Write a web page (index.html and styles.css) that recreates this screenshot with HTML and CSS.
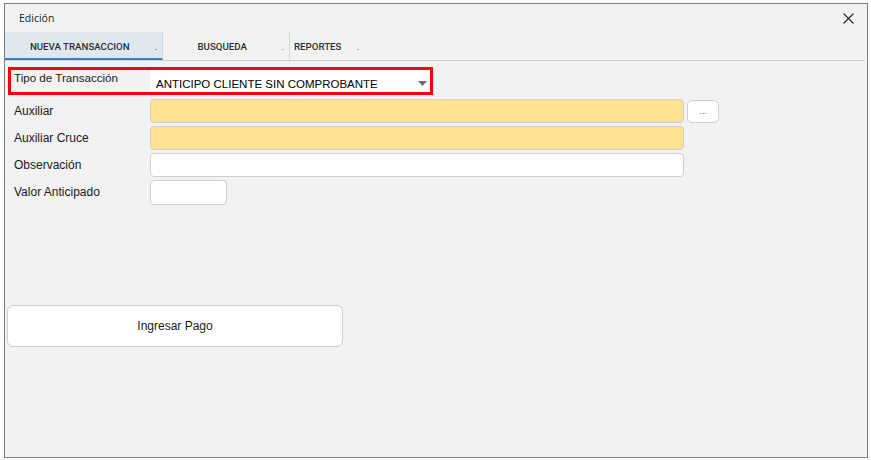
FILE: index.html
```html
<!DOCTYPE html>
<html lang="es">
<head>
    <meta charset="UTF-8">
    <title>Edición</title>
    <link rel="stylesheet" href="styles.css">
</head>
<body>
    <div class="window">
        <div class="titlebar">
            <span class="title">Edición</span>
            <svg class="close" width="11" height="11" viewBox="0 0 11 11">
                <path d="M0.5 0.5 L10.5 10.5 M10.5 0.5 L0.5 10.5" stroke="#2b2b2b" stroke-width="1.2" fill="none"/>
            </svg>
        </div>
        <ul class="tabs">
            <li class="tab active"><span class="tab-label">NUEVA TRANSACCION</span><span class="dot">.</span></li>
            <li class="tab"><span class="tab-label">BUSQUEDA</span><span class="dot">.</span></li>
            <li class="tab last"><span class="tab-label">REPORTES</span><span class="dot">.</span></li>
        </ul>
        <div class="form">
            <div class="row highlight">
                <label class="label">Tipo de Transacción</label>
                <div class="combo">
                    <span>ANTICIPO CLIENTE SIN COMPROBANTE</span>
                    <svg width="9" height="5" viewBox="0 0 9 5"><path d="M0 0 L9 0 L4.5 5 Z" fill="#6b6b6b"/></svg>
                </div>
            </div>
            <div class="row">
                <label class="label">Auxiliar</label>
                <div class="field wide yellow"></div>
                <button class="more">...</button>
            </div>
            <div class="row">
                <label class="label">Auxiliar Cruce</label>
                <div class="field wide yellow"></div>
            </div>
            <div class="row">
                <label class="label">Observación</label>
                <div class="field wide"></div>
            </div>
            <div class="row">
                <label class="label">Valor Anticipado</label>
                <div class="field small"></div>
            </div>
        </div>
        <button class="submit">Ingresar Pago</button>
    </div>
</body>
</html>
```

FILE: styles.css
```css
* {
    box-sizing: border-box;
}

body {
    margin: 0;
    background: #fff;
    font-family: "Liberation Sans", Arial, sans-serif;
    color: #1a1a1a;
}

.window {
    margin: 3px 0 0 4px;
    width: 864px;
    height: 455px;
    border: 1px solid #7d7d7d;
    background: #f2f2f2;
}

.titlebar {
    height: 28px;
    display: flex;
    align-items: center;
    justify-content: space-between;
    padding: 0 13px 0 14px;
}

.title {
    font-family: "Open Sans", "Noto Sans", sans-serif;
    font-size: 10.5px;
    color: #222;
}

.tabs {
    list-style: none;
    margin: 0;
    padding: 0;
    height: 29px;
    display: flex;
    border-bottom: 1px solid #cfcfcf;
    margin-right: 2px;
}

.tab {
    display: flex;
    align-items: center;
    height: 28px;
    font-family: Roboto, "Liberation Sans", sans-serif;
    font-size: 9.7px;
    font-weight: 500;
    color: #2e2e2e;
    border-right: 1px solid #d6d6d6;
    padding-top: 1px;
}

.tab:nth-child(1) {
    width: 158px;
}

.tab:nth-child(2) {
    width: 127px;
}

.tab.last {
    width: 76px;
    border-right: 0;
}

.tab.active {
    background: #dfe7ef;
    border-bottom: 2px solid #3d7fc2;
    height: 28px;
    padding-top: 3px;
}

.tab-label {
    flex: 1;
    text-align: center;
}

.tab.last .tab-label {
    text-align: left;
    padding-left: 4px;
    flex: none;
}

.dot {
    margin-right: 5px;
    font-weight: normal;
}

.tab.last .dot {
    margin-left: 15px;
}

.form {
    padding: 6px 0 0 3px;
    display: flex;
    flex-direction: column;
    gap: 3px;
}

.row {
    display: flex;
    align-items: center;
    height: 24px;
    padding-left: 6px;
}

.label {
    width: 136px;
    font-size: 12px;
    color: #1a1a1a;
}

.row.highlight {
    width: 425px;
    height: 28px;
    border: 3px solid #ff0000;
    padding-left: 3px;
    align-items: stretch;
    margin-bottom: 1px;
}

.row.highlight .label {
    padding-top: 1px;
    font-size: 11.6px;
}

.combo {
    flex: 1;
    background: #fff;
    display: flex;
    align-items: center;
    justify-content: space-between;
    padding: 5px 3px 0 6px;
    font-size: 11.5px;
    color: #000;
}

.field {
    height: 24px;
    background: #fff;
    border: 1px solid #cfcfcf;
    border-radius: 4px;
}

.field.wide {
    width: 534px;
}

.field.small {
    width: 77px;
    height: 25px;
}

.field.yellow {
    background: #fee292;
}

.more {
    margin-left: 3px;
    width: 32px;
    height: 23px;
    background: #fff;
    border: 1px solid #d0d0d0;
    border-radius: 5px;
    font-size: 9px;
    color: #5a4a7a;
    padding: 0;
}

.submit {
    display: block;
    margin: 101px 0 0 2px;
    width: 336px;
    height: 42px;
    background: #fff;
    border: 1px solid #cfcfcf;
    border-radius: 6px;
    font-family: "Liberation Sans", Arial, sans-serif;
    font-size: 12px;
    color: #1a1a1a;
}
```
